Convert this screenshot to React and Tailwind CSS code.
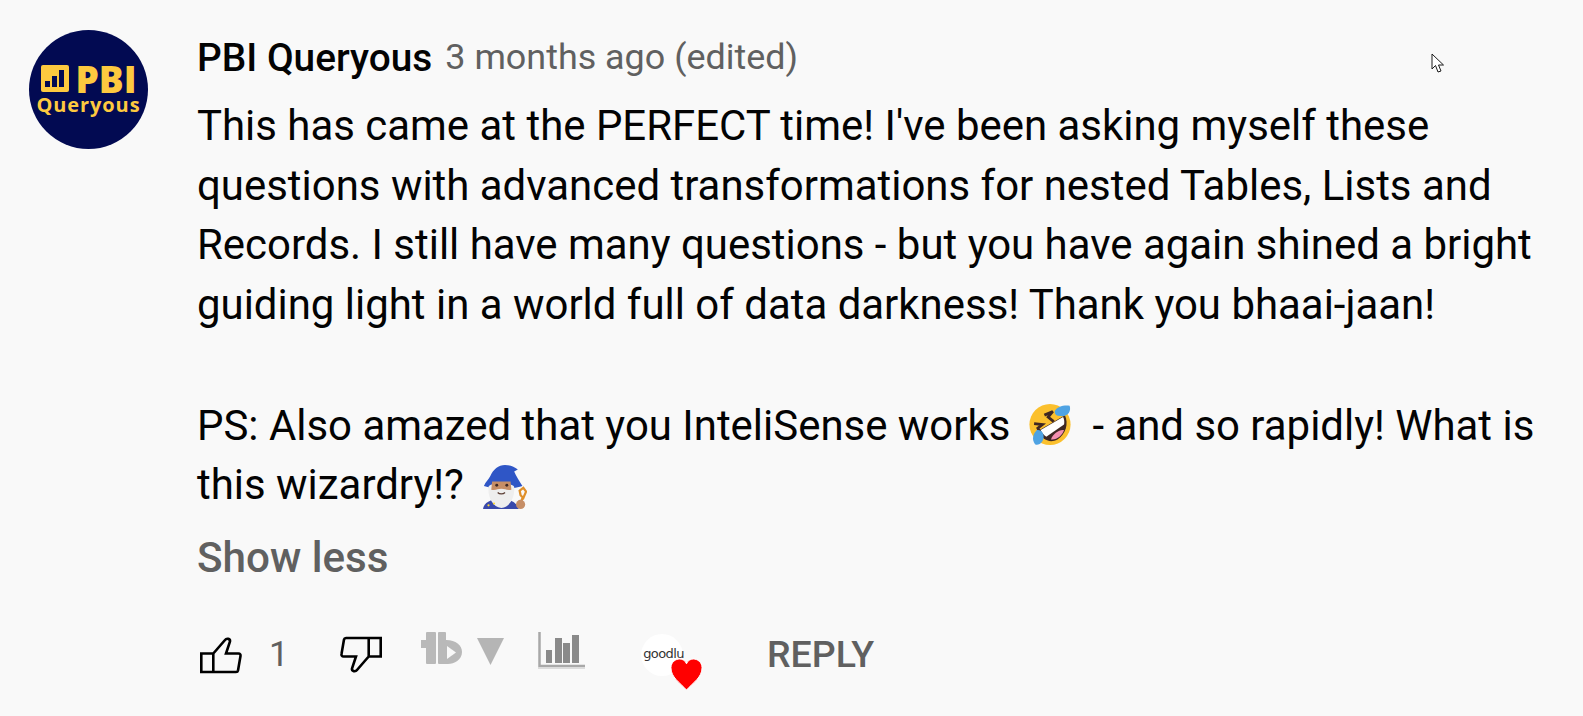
import React from "react";

function Thumb({ className }) {
  return (
    <svg className={className} width="44" height="38" viewBox="0 0 44 38" fill="none" stroke="#000" strokeWidth="2.600">
      <path d="M2.300 17.500 H14.300 L26 4 C27.500 2 31.500 2.500 31 5.500 L27 17.500 H39.500 C41 17.500 41.800 18.500 41.500 20 L39 34.500 C38.800 35.500 38 36 37 36 H2.300z M14.300 17.500 V36" />
    </svg>
  );
}

function Avatar() {
  return (
    <div className="flex h-[119px] w-[119px] shrink-0 flex-col items-center justify-center rounded-full bg-[#020a52] text-[#fdc93f] font-['Open_Sans',sans-serif] font-bold">
      <div className="flex h-[30px] items-center gap-[6px] pl-[1px]">
        <svg width="28" height="27" viewBox="0 0 28 27">
          <rect width="28" height="27" rx="2" fill="#fdc93f" />
          <rect x="4" y="16" width="5" height="6" fill="#020a52" />
          <rect x="11" y="11" width="5" height="11" fill="#020a52" />
          <rect x="18" y="5" width="5" height="17" fill="#020a52" />
        </svg>
        <span className="text-[37px] font-extrabold leading-[30px]">PBI</span>
      </div>
      <span className="text-[20px] leading-[22px] tracking-[0.9px]">Queryous</span>
    </div>
  );
}

function LaughEmoji() {
  return (
    <svg className="ml-[18px] mr-[20px] inline-block align-[-6px]" width="44" height="43" viewBox="0 0 46 46">
      <circle cx="23" cy="23" r="22" fill="#fbc02d" />
      <path d="M10 30 L39 13 C43 22 40 33 31 39 C22 44 14 38 10 30z" fill="#3e2723" />
      <path d="M13 29 L37 15 C38.500 18 38.500 21 38 23 L19 36 C16 34 14 32 13 29z" fill="#fff" />
      <path d="M24 39 C26 33 33 28 38 29 C36 35 30 40 24 39z" fill="#f48fb1" />
      <path d="M17 13 L26 9 L21 15 L27 20" fill="none" stroke="#3e2723" strokeWidth="3" />
      <path d="M6 22 L15 23 L10 27 L13 33" fill="none" stroke="#3e2723" strokeWidth="3" />
      <path d="M28 9 C30 4 38 2 44 3 C46 9 42 15 34 14 C30 14 28 12 28 9z" fill="#4fa3e3" />
      <path d="M9 29 C14 28 17 33 16 38 C15 43 10 46 7 44 C3 39 5 33 9 29z" fill="#4fa3e3" />
    </svg>
  );
}

function WizardEmoji() {
  return (
    <svg className="ml-[19px] inline-block align-[-11px]" width="44" height="46" viewBox="0 0 48 48">
      <path d="M0 48 C1 41 8 37 19 37 C30 37 37 41 39 48z" fill="#3949ab" />
      <path d="M1 23 C3 18 6 16 8 12 C11 5 17 0 24 0 C30 0 34 2 38 5 L34 7 C36 12 40 18 43 23 C30 27 14 27 1 23z" fill="#2f56c6" />
      <path d="M6 24 C6 19 34 19 34 24 C35 34 30 46 20 47 C10 46 5 34 6 24z" fill="#eeeeee" />
      <path d="M10 18 H30 L31 27 C26 28 24 26 20 26 C16 26 14 28 9 27z" fill="#c68e66" />
      <circle cx="15" cy="22" r="1.600" fill="#3e2723" />
      <circle cx="26" cy="22" r="1.600" fill="#3e2723" />
      <path d="M16 30 C18 32 22 32 24 30" fill="none" stroke="#5d4037" strokeWidth="1.500" />
      <path d="M41 42 L43 36" stroke="#e0902a" strokeWidth="2.500" />
      <path d="M40 28 L44 25 L47 29 L44 36 L41 33z" fill="none" stroke="#e0902a" strokeWidth="2.500" />
      <circle cx="41" cy="43" r="5" fill="#c68e66" />
      <circle cx="6" cy="44" r="1.200" fill="#fdd835" />
      <circle cx="12" cy="42" r="1.200" fill="#fdd835" />
    </svg>
  );
}

function ActionBar() {
  return (
    <div className="mt-[38px] flex h-[60px] items-center">
      <Thumb className="ml-[2px] shrink-0" />
      <span className="ml-[26px] w-[20px] text-[35px] leading-[40px] text-[#606060]">1</span>
      <Thumb className="ml-[50px] shrink-0 rotate-180" />
      <svg className="ml-[38px] mb-[14px] shrink-0 blur-[0.4px]" width="41" height="32" viewBox="0 0 41 32" fill="#b9b9b9">
        <rect x="0" y="8" width="6" height="8" />
        <rect x="5" y="0" width="10" height="32" rx="1" />
        <rect x="17" y="0" width="8" height="32" rx="1" />
        <path d="M20 8.500 C32 6 41 12 41 20 C41 28 33 32 27 32 L20 32z" />
        <path d="M26 14 L35 20.500 L26 27z" fill="#f9f9f9" />
      </svg>
      <svg className="ml-[15px] mb-[7px] shrink-0" width="27" height="27" viewBox="0 0 27 27">
        <path d="M0 0 H27 L13.500 27z" fill="#b5b5b5" />
      </svg>
      <svg className="ml-[33px] mb-[9px] shrink-0 blur-[0.6px]" width="48" height="37" viewBox="0 0 48 37">
        <path d="M2.500 0 V34 H48" fill="none" stroke="#a8a8a8" strokeWidth="2.500" />
        <path d="M1 36 H48" stroke="#dcdcdc" strokeWidth="2" />
        <rect x="9" y="18" width="6" height="13" fill="#8a8a8a" />
        <rect x="18" y="6" width="7" height="25" fill="#8a8a8a" />
        <rect x="26" y="11" width="7" height="20" fill="#8a8a8a" />
        <rect x="35" y="3" width="7" height="28" fill="#8a8a8a" />
      </svg>
      <div className="relative ml-[56px] flex h-[42px] w-[42px] shrink-0 items-center justify-center rounded-full bg-white">
        <span className="mb-[2px] ml-[3px] text-[13px] leading-[15px] text-[#333] font-['DejaVu_Sans',sans-serif] tracking-[-0.6px]">goodlu</span>
        <svg className="absolute left-[29px] top-[24px]" width="33" height="33" viewBox="0 0 34 34">
          <path d="M17 33 C10 25 1 20 1 10 C1 4 6 1 10 1 C13 1 16 3 17 6 C18 3 21 1 24 1 C28 1 33 4 33 10 C33 20 24 25 17 33z" fill="#ff0000" stroke="#fff" strokeWidth="1" />
        </svg>
      </div>
      <span className="mb-[2px] ml-[84px] text-[37.500px] font-medium leading-[40px] text-[#606060]">REPLY</span>
    </div>
  );
}

export default function App() {
  return (
    <div className="relative flex h-[716px] w-full gap-[49px] overflow-hidden bg-[#f9f9f9] pl-[29px] pt-[30px] font-['Roboto',sans-serif]">
      <Avatar />
      <div className="min-w-0 flex-1">
        <div className="flex h-[58px] items-center whitespace-nowrap pb-[2px]">
          <span className="text-[38.800px] font-medium text-[#030303]">PBI Queryous</span>
          <span className="ml-[13px] text-[35.900px] text-[#606060]">3 months ago (edited)</span>
        </div>
        <div className="mt-[8px] text-[41.950px] leading-[59.500px] text-[#030303]">
          <p>
            This has came at the PERFECT time! I've been asking myself these
            <br />
            questions with advanced transformations for nested Tables, Lists and
            <br />
            Records. I still have many questions - but you have again shined a bright
            <br />
            guiding light in a world full of data darkness! Thank you bhaai-jaan!
          </p>
          <p className="mt-[61.500px]">
            PS: Also amazed that you InteliSense works
            <LaughEmoji />
            - and so rapidly! What is
            <br />
            this wizardry!?
            <WizardEmoji />
          </p>
        </div>
        <button className="mt-[13px] block text-[42.200px] font-medium leading-[59px] text-[#606060]">Show less</button>
        <ActionBar />
      </div>
      <svg className="absolute left-[1431px] top-[53px]" width="14" height="21" viewBox="0 0 14 21">
        <path d="M1 1 V16 L4.500 12.500 L7 19 L10 18 L7.500 12 H12.500z" fill="#fff" stroke="#1a1a1a" strokeWidth="1" />
      </svg>
    </div>
  );
}
